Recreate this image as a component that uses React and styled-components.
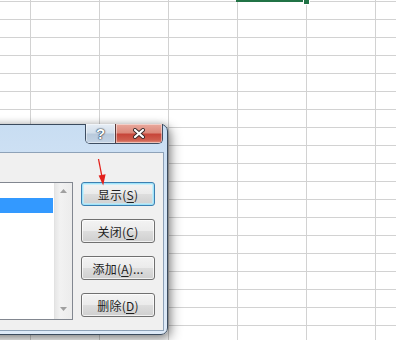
import React from 'react';
import styled, { createGlobalStyle } from 'styled-components';

const Global = createGlobalStyle`
  html, body { margin: 0; padding: 0; }
  body {
    width: 396px;
    height: 340px;
    overflow: hidden;
    background: #fff;
    font-family: "Noto Sans CJK SC", "Noto Sans", sans-serif;
  }
`;

const Sheet = styled.div`
  position: relative;
  width: 396px;
  height: 340px;
  overflow: hidden;
  background-color: #fff;
  background-image:
    linear-gradient(to right, #d2d2d2 1px, transparent 1px),
    linear-gradient(to bottom, #d2d2d2 1px, transparent 1px);
  background-size: 69px 18px;
  background-position: 30px 1px;
`;

const Selection = styled.div`
  position: absolute;
  left: 236px;
  top: -18px;
  width: 70px;
  height: 20px;
  box-sizing: border-box;
  border: 2px solid #217346;
`;

const Handle = styled.div`
  position: absolute;
  left: 304px;
  top: -1px;
  width: 5px;
  height: 5px;
  background: #217346;
  outline: 1px solid #fff;
`;

const Window = styled.div`
  position: absolute;
  left: -232px;
  top: 124px;
  width: 400px;
  height: 211px;
  box-sizing: border-box;
  display: flex;
  flex-direction: column;
  border: 1px solid #3b4b5e;
  border-radius: 7px;
  padding: 0 3px 3px 3px;
  background: linear-gradient(to bottom, #c8ddf2 0%, #d6e6f7 40%, #dde9f7 100%);
  box-shadow: 3px 4px 12px rgba(0, 0, 0, 0.42), 0 0 7px rgba(0, 0, 0, 0.2);
`;

const TitleBar = styled.div`
  height: 27px;
  display: flex;
  justify-content: flex-end;
  align-items: flex-start;
  padding-right: 1px;
`;

const Caption = styled.div`
  display: flex;
  margin-top: -1px;
  height: 20px;
  border: 1px solid #3e4e62;
  border-top: none;
  border-radius: 0 0 5px 5px;
  overflow: hidden;
  box-sizing: border-box;
`;

const CapButton = styled.div`
  width: ${p => p.$w}px;
  height: 100%;
  display: flex;
  align-items: center;
  justify-content: center;
  box-sizing: border-box;
  border-left: ${p => (p.$close ? '1px solid #5b3a3a' : 'none')};
  box-shadow: inset 0 0 0 1px rgba(255, 255, 255, 0.45);
  background: ${p =>
    p.$close
      ? 'linear-gradient(to bottom, #e9a99d 0%, #dc8a7c 45%, #c7463a 55%, #cf5f4f 85%, #e59482 100%)'
      : 'linear-gradient(to bottom, #e6edf5 0%, #d3dfeb 45%, #b9cadc 55%, #c3d3e4 100%)'};
  color: #fff;
  font-family: "Liberation Sans", Arial, sans-serif;
  font-weight: bold;
  font-size: 15px;
  text-shadow: 0 0 1px #2b3a4a, 0 0 1px #2b3a4a, 0 0 2px #2b3a4a;
`;

const Client = styled.div`
  flex: 1;
  display: flex;
  gap: 8px;
  padding: 29px 8px 10px 0;
  background: #f0f0f0;
  border: 1px solid #8ea2b8;
  min-height: 0;
`;

const ListBox = styled.div`
  flex: 1;
  display: flex;
  border: 1px solid #828790;
  background: #fff;
`;

const Items = styled.div`
  flex: 1;
  margin-right: 1px;
  display: flex;
  flex-direction: column;
`;

const Item = styled.div`
  height: 15px;
  background: ${p => (p.$selected ? '#3399ff' : 'transparent')};
`;

const ScrollBar = styled.div`
  width: 17px;
  display: flex;
  flex-direction: column;
  justify-content: space-between;
  align-items: center;
  padding: 6px 0 8px;
  background: linear-gradient(to right, #e6e6e6, #f2f2f2 30%, #ececec);
  border-left: 1px solid #e2e2e2;
`;

const Column = styled.div`
  width: 74px;
  display: flex;
  flex-direction: column;
  gap: 13px;
`;

const Button = styled.div`
  height: 24px;
  box-sizing: border-box;
  display: flex;
  align-items: center;
  justify-content: center;
  border: 1px solid ${p => (p.$default ? '#3c7fb1' : '#707070')};
  border-radius: 3px;
  background: linear-gradient(to bottom, #f3f3f3 0%, #ebebeb 48%, #dddddd 52%, #cfcfcf 100%);
  box-shadow: ${p =>
    p.$default
      ? 'inset 0 0 0 1px #9ee3fa, inset 0 0 0 2px rgba(190, 236, 252, 0.7)'
      : 'inset 0 0 0 1px rgba(255, 255, 255, 0.7)'};
  font-size: 12px;
  color: #1e1e1e;
  letter-spacing: 0.2px;
  u { text-underline-offset: 2px; }
`;

const Arrow = styled.svg`
  position: absolute;
  left: 90px;
  top: 155px;
  overflow: visible;
`;

function Tri({ up }) {
  return (
    <svg width="7" height="4" viewBox="0 0 7 4">
      <path d={up ? 'M0 4 L3.5 0 L7 4 Z' : 'M0 0 L3.5 4 L7 0 Z'} fill="#a0a0a0" />
    </svg>
  );
}

export default function App() {
  return (
    <Sheet>
      <Global />
      <Selection />
      <Handle />
      <Window>
        <TitleBar>
          <Caption>
            <CapButton $w={29}>?</CapButton>
            <CapButton $w={47} $close>
              <svg width="14" height="11" viewBox="0 0 14 11">
                <path d="M3 2 L11 9 M11 2 L3 9" stroke="#3a2a2a" strokeWidth="4" strokeLinecap="round" />
                <path d="M3 2 L11 9 M11 2 L3 9" stroke="#fff" strokeWidth="2.2" strokeLinecap="round" />
              </svg>
            </CapButton>
          </Caption>
        </TitleBar>
        <Client>
          <ListBox>
            <Items>
              <Item />
              <Item $selected />
            </Items>
            <ScrollBar>
              <Tri up />
              <Tri />
            </ScrollBar>
          </ListBox>
          <Column>
            <Button $default>显示(<u>S</u>)</Button>
            <Button>关闭(<u>C</u>)</Button>
            <Button>添加(<u>A</u>)...</Button>
            <Button>删除(<u>D</u>)</Button>
          </Column>
        </Client>
      </Window>
      <Arrow width="20" height="32" viewBox="90 155 20 32">
        <path d="M98.5 159 L102 177" stroke="#e3201b" strokeWidth="1.3" />
        <path d="M98.6 175.5 L103.2 185.5 L105.6 174.2 Z" fill="#e3201b" />
      </Arrow>
    </Sheet>
  );
}
